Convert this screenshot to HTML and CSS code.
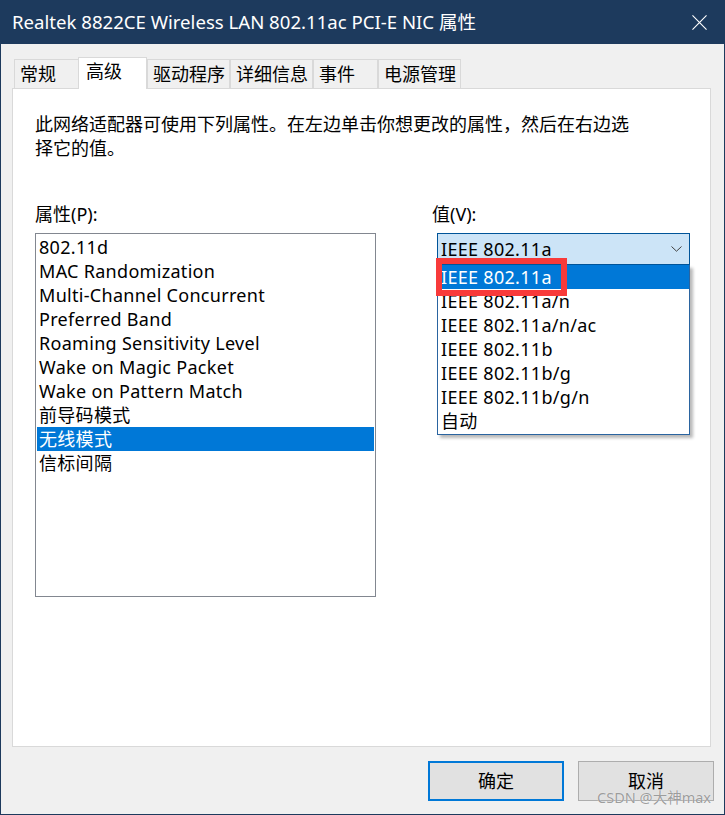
FILE: index.html
```html
<!DOCTYPE html>
<html lang="zh-CN">
<head>
<meta charset="utf-8">
<title>属性</title>
<link rel="stylesheet" href="styles.css">
</head>
<body>
<div class="window">
  <div class="titlebar">
    <span class="title">Realtek 8822CE Wireless LAN 802.11ac PCI-E NIC 属性</span>
    <svg class="close" width="16" height="16" viewBox="0 0 16 16"><path d="M0.5 0.5 L15.5 15.5 M15.5 0.5 L0.5 15.5" stroke="#ffffff" stroke-width="1.2" fill="none"/></svg>
  </div>
  <div class="content">
    <div class="tabs">
      <div class="tab">常规</div>
      <div class="tab active">高级</div>
      <div class="tab">驱动程序</div>
      <div class="tab">详细信息</div>
      <div class="tab">事件</div>
      <div class="tab">电源管理</div>
    </div>
    <div class="panel">
      <p class="desc">此网络适配器可使用下列属性。在左边单击你想更改的属性，然后在右边选<br>择它的值。</p>
      <div class="fields">
        <div class="col-left">
          <div class="label">属性(P):</div>
          <div class="listbox">
            <div class="item">802.11d</div>
            <div class="item">MAC Randomization</div>
            <div class="item">Multi-Channel Concurrent</div>
            <div class="item">Preferred Band</div>
            <div class="item">Roaming Sensitivity Level</div>
            <div class="item">Wake on Magic Packet</div>
            <div class="item">Wake on Pattern Match</div>
            <div class="item">前导码模式</div>
            <div class="item selected">无线模式</div>
            <div class="item">信标间隔</div>
          </div>
        </div>
        <div class="col-right">
          <div class="label">值(V):</div>
          <div class="combo-wrap">
            <div class="combo">
              <span>IEEE 802.11a</span>
              <svg class="chevron" width="11" height="6" viewBox="0 0 11 6"><path d="M0.5 0.5 L5.5 5.2 L10.5 0.5" stroke="#404040" stroke-width="1" fill="none"/></svg>
            </div>
            <div class="dropdown">
              <div class="ditem selected">IEEE 802.11a</div>
              <div class="ditem">IEEE 802.11a/n</div>
              <div class="ditem">IEEE 802.11a/n/ac</div>
              <div class="ditem">IEEE 802.11b</div>
              <div class="ditem">IEEE 802.11b/g</div>
              <div class="ditem">IEEE 802.11b/g/n</div>
              <div class="ditem">自动</div>
            </div>
            <div class="annot"></div>
          </div>
        </div>
      </div>
    </div>
    <div class="buttons">
      <button class="btn primary">确定</button>
      <button class="btn">取消</button>
    </div>
  </div>
  <div class="watermark">CSDN @大神max</div>
</div>
</body>
</html>
```
FILE: styles.css
```css
* { box-sizing: border-box; }
html, body { margin: 0; padding: 0; background: #f0f0f0; }
body {
  font-family: "Noto Sans", "Noto Sans CJK SC", sans-serif;
  font-size: 18px;
  color: #000;
}
.window {
  position: relative;
  width: 725px;
  height: 815px;
  background: #f0f0f0;
  border: 1px solid #1d3a5d;
  border-top: none;
  overflow: hidden;
}
.titlebar {
  height: 44px;
  margin: 0 -1px;
  background: #1d3a5d;
  color: #fff;
  display: flex;
  align-items: center;
  justify-content: space-between;
  padding: 0 18px 0 12px;
}
.title { font-size: 18.6px; line-height: 24px; padding-bottom: 1px; }
.close { display: block; width: 15px; height: 15px; }
.content {
  padding: 13px 13px 0 11px;
}
.tabs {
  display: flex;
  align-items: flex-end;
  height: 31px;
  margin-left: 2px;
  position: relative;
  z-index: 2;
}
.tab {
  height: 29px;
  min-width: 65px;
  padding: 0 4px 0 5px;
  line-height: 28px;
  background: #f0f0f0;
  border: 1px solid #d9d9d9;
  border-bottom: none;
  white-space: nowrap;
}
.tab.active {
  height: 32px;
  margin: 0 0 -1px -1px;
  padding: 0 7px;
  line-height: 27px;
  min-width: 69px;
  background: #fff;
  position: relative;
  z-index: 3;
}
.panel {
  height: 659px;
  background: #fff;
  border: 1px solid #d9d9d9;
  padding: 23px 0 0 22px;
  position: relative;
  z-index: 1;
}
.desc {
  margin: 0;
  line-height: 24px;
}
.fields {
  display: flex;
  margin-top: 42px;
}
.label { line-height: 24px; }
.col-left { width: 341px; }
.col-right { margin-left: 56px; }
.listbox {
  margin-top: 7px;
  height: 364px;
  border: 1px solid #828790;
  padding: 1px;
}
.item {
  height: 24px;
  line-height: 24px;
  padding-left: 2px;
  white-space: nowrap;
  letter-spacing: 0.3px;
}
.item.selected { background: #0078d7; color: #fff; }
.combo-wrap {
  position: relative;
  margin-top: 7px;
  margin-left: 5px;
  width: 253px;
}
.combo {
  height: 32px;
  background: #cce4f7;
  border: 1px solid #005499;
  display: flex;
  align-items: center;
  justify-content: space-between;
  padding: 0 7px 1px 3px;
  line-height: 24px;
  letter-spacing: 0.3px;
}
.chevron { display: block; margin-top: 1px; }
.dropdown {
  position: absolute;
  left: 0;
  top: 32px;
  width: 253px;
  background: #fff;
  border: 1px solid #2a64a0;
  border-top: none;
  padding-bottom: 1px;
  box-shadow: 3px 3px 3px rgba(0,0,0,0.28);
  z-index: 5;
}
.ditem {
  height: 24px;
  line-height: 24px;
  padding-left: 3px;
  white-space: nowrap;
  letter-spacing: 0.3px;
}
.ditem.selected { background: #0078d7; color: #fff; }
.annot {
  position: absolute;
  left: -1px;
  top: 25px;
  width: 131px;
  height: 38px;
  border: 6px solid #f83a3a;
  z-index: 6;
}
.buttons {
  display: flex;
  justify-content: flex-end;
  gap: 14px;
  margin-top: 14px;
  margin-right: -3px;
}
.btn {
  width: 136px;
  height: 40px;
  font-family: inherit;
  font-size: 18px;
  color: #000;
  background: #e1e1e1;
  border: 1px solid #adadad;
  padding: 0;
  line-height: 24px;
}
.btn.primary { border: 2px solid #0078d7; }
.watermark {
  position: absolute;
  right: 13px;
  bottom: 8px;
  font-size: 14.5px;
  line-height: 18px;
  color: rgba(140,140,140,0.85);
  text-shadow: 0 0 1px rgba(255,255,255,0.9);
}
```
